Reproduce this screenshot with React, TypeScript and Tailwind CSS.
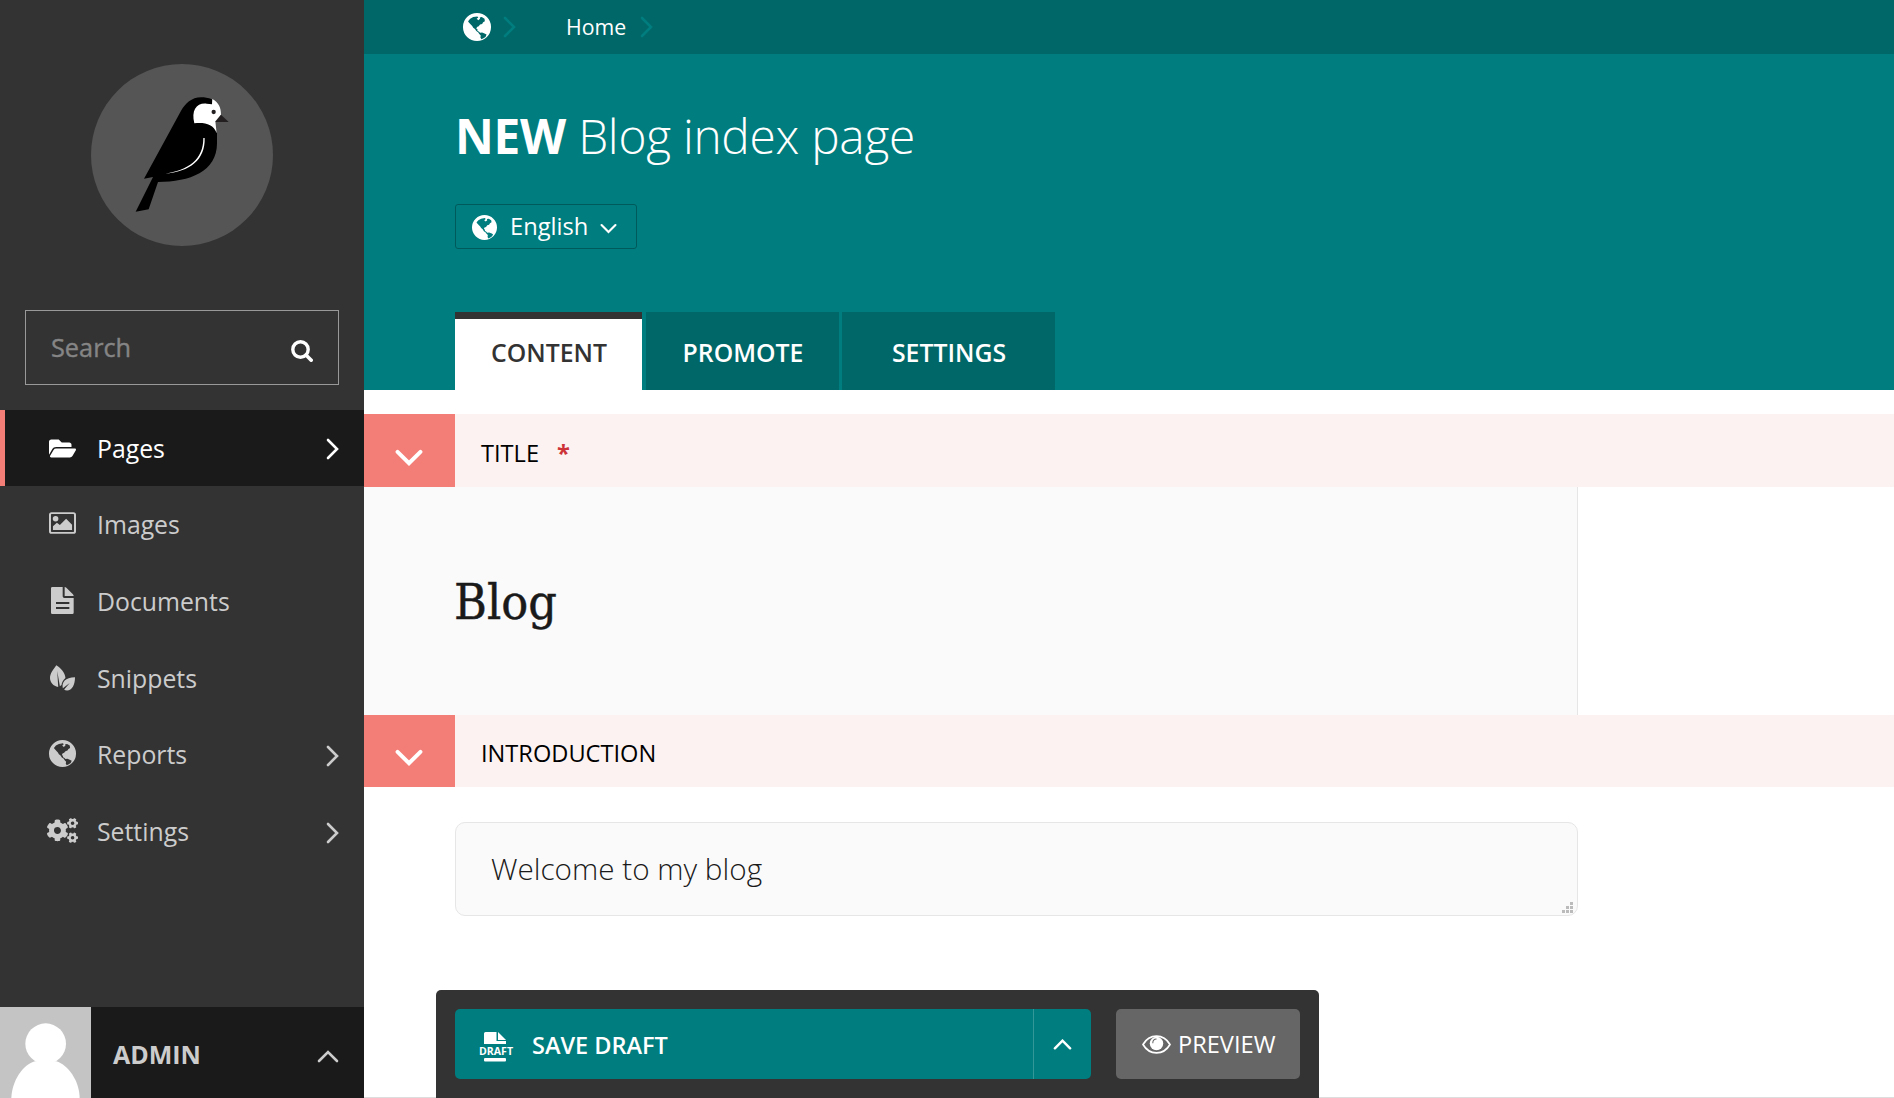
import type { ReactNode } from "react";
import { FaCogs, FaFolderOpen } from "react-icons/fa";

function Globe({ className }: { className: string }) {
  return (
    <svg viewBox="0 0 82 82" className={className}>
      <path
        fill="currentColor"
        fillRule="evenodd"
        d="M41 0a41 41 0 1 0 0 82a41 41 0 1 0 0-82zM15 24l6-7 9-5 12-2 3 3-5 4 5 4 5-4-1-4 6-1 8 5 1 7-5 3-3 5-6 2-4 5-5 2-2 5 4 2-1 4 5 3 3 3 6-1 7 3 6 3-3 7-6 4-6 3-3-5 1-6-5-5-2-4-6-4-4-6-5-4-3-5-5-5-6-7z"
      />
    </svg>
  );
}

function Chevron({ dir, className, stroke = 2.6 }: { dir: "right" | "down" | "up"; className: string; stroke?: number }) {
  const d = { right: "M2 2l9 9-9 9", down: "M2 2l9 9 9-9", up: "M2 11l9-9 9 9" }[dir];
  return (
    <svg viewBox={dir === "right" ? "0 0 13 22" : "0 0 22 13"} className={className}>
      <path d={d} fill="none" stroke="currentColor" strokeWidth={stroke} strokeLinecap="round" />
    </svg>
  );
}

function Bird() {
  return (
    <svg viewBox="33 42 546 546" className="size-[182px]">
      <circle cx="306" cy="315" r="273" fill="#555" />
      <path d="M396 148C345 130 320 155 304 181L192 386l27-5L167 485l39-7 28-82C330 396 411 365 411 280V250L400 215 396 148z" fill="#000" />
      <path d="M397 147C415 157 423 172 423 194L406 214l4 36C400 222 375 217 343 220C333 180 350 158 380 161l16 2z" fill="#fff" />
      <path d="M423 194l23 22h-40z" fill="#231f20" />
      <circle cx="401" cy="186" r="6.5" fill="#231f20" />
      <path d="M370 264h4C376 330 330 365 254 371C325 360 370 330 370 264z" fill="#fff" />
    </svg>
  );
}

function ImageIcon() {
  return (
    <svg viewBox="0 0 82 66" className="mb-0.5 h-[22px] w-[27px]">
      <rect x="3" y="3" width="76" height="60" rx="5" fill="none" stroke="currentColor" strokeWidth="6" />
      <circle cx="20" cy="20" r="8.5" fill="currentColor" />
      <path d="M12 54V43l12-11 9 7 19-19 18 18v16z" fill="currentColor" />
    </svg>
  );
}

function DocIcon() {
  return (
    <svg viewBox="0 0 69 81" className="mb-0.5 h-[27px] w-[23px]">
      <path
        fill="currentColor"
        fillRule="evenodd"
        d="M4 0h31v28q0 5 5 5h28v44q0 4-4 4H4q-4 0-4-4V4q0-4 4-4zM15 45v6h40v-6zM15 60v6h40v-6zM41 0q3 0 5 2l19 19q3 3 3 6H41z"
      />
    </svg>
  );
}

function LeavesIcon() {
  return (
    <svg viewBox="0 0 76 78" className="h-[26px] w-[25px]">
      <path fill="currentColor" fillRule="evenodd" d="M19 0C32 8 46 22 47 39C39 46 36 54 35 60L30 64L22 18L25 66C10 64 0 52 0 39C0 24 10 14 19 0z" />
      <path fill="currentColor" d="M76 37C76 60 67 77 52 77Q46 77 43 74L60 54L39 70C35 52 46 38 76 37z" />
    </svg>
  );
}

function SearchIcon() {
  return (
    <svg viewBox="0 0 22 22" className="size-[22px]">
      <circle cx="9.5" cy="9.5" r="7.7" fill="none" stroke="currentColor" strokeWidth="3.4" />
      <path d="M15 15l5.2 5.2" stroke="currentColor" strokeWidth="3.6" strokeLinecap="round" />
    </svg>
  );
}

function EyeIcon() {
  return (
    <svg viewBox="0 0 86 56" className="h-[19px] w-[29px]">
      <path d="M3 28C22-5 64-5 83 28C64 61 22 61 3 28z" fill="none" stroke="currentColor" strokeWidth="5" />
      <circle cx="43" cy="25" r="20" fill="currentColor" />
      <path d="M32 24C32 17 37 12 43 12" fill="none" stroke="#666" strokeWidth="3" />
    </svg>
  );
}

function DraftIcon() {
  return (
    <svg viewBox="0 0 40 30" className="h-[30px] w-[40px]">
      <path d="M8 1.500Q8 0 9.500 0H20.500V9H30V12H8zM22 0L30 8H22z" fill="currentColor" />
      <text x="20" y="23" textAnchor="middle" textLength="34" lengthAdjust="spacingAndGlyphs" fontSize="11" fontWeight="700" fontFamily="Open Sans, sans-serif" fill="currentColor">DRAFT</text>
      <rect x="8" y="26" width="22" height="3.500" rx="1" fill="currentColor" />
    </svg>
  );
}

function NavItem({ icon, label, active, more }: { icon: ReactNode; label: string; active?: boolean; more?: boolean }) {
  return (
    <a
      className={
        active
          ? "flex h-[76px] items-center border-l-5 border-[#f37e77] bg-[#1a1a1a] pr-[25px] pl-[39px] text-white"
          : "flex h-[76.800px] items-center pr-[25px] pl-11 text-[#ccc]"
      }
    >
      <span className="flex w-9 justify-center">{icon}</span>
      <span className="ml-[17px] grow text-[24.800px] leading-none">{label}</span>
      {more && <Chevron dir="right" className="mt-0.5 h-[22px] w-[13px]" />}
    </a>
  );
}

function SectionBar({ label, required, height, pad }: { label: string; required?: boolean; height: string; pad: string }) {
  return (
    <div className={`flex ${height} bg-[#fcf2f1]`}>
      <div className="flex w-[91px] items-center justify-center bg-[#f37e77] pt-[13px] pr-px text-white">
        <Chevron dir="down" stroke={3.1} className="h-[17px] w-[28px]" />
      </div>
      <h2 className={`flex items-center ${pad} pl-[26px] text-[23.600px] leading-none text-black`}>
        {label}
        {required && <span className="ml-[18px] font-bold text-[#cd3238]">*</span>}
      </h2>
    </div>
  );
}

export default function App() {
  return (
    <div className="flex h-[1098px] w-full overflow-hidden bg-white font-['Open_Sans',sans-serif]">
      <aside className="flex w-[364px] shrink-0 flex-col bg-[#333]">
        <div className="flex justify-center pt-16">
          <Bird />
        </div>
        <div className="mx-[25px] mt-16 flex h-[75px] w-[314px] items-center justify-between border border-[#999] pr-[25px] pl-[25px] text-white">
          <span className="text-[25.300px] leading-none text-[#858585] [-webkit-text-stroke:0.4px_#858585]">Search</span>
          <span className="mt-[7px]"><SearchIcon /></span>
        </div>
        <nav className="mt-[25px]">
          <NavItem active more label="Pages" icon={<FaFolderOpen className="size-[27px]" />} />
          <NavItem label="Images" icon={<ImageIcon />} />
          <NavItem label="Documents" icon={<DocIcon />} />
          <NavItem label="Snippets" icon={<LeavesIcon />} />
          <NavItem more label="Reports" icon={<Globe className="mb-0.5 size-[27px]" />} />
          <NavItem more label="Settings" icon={<FaCogs className="mb-0.5 size-[31px]" />} />
        </nav>
        <div className="mt-auto flex h-[91px] items-center bg-[#1a1a1a] text-[#ccc]">
          <svg viewBox="0 0 273 273" className="size-[91px]">
            <rect width="273" height="273" fill="#c4c4c4" />
            <circle cx="137" cy="110" r="61" fill="#fff" />
            <path d="M34 273C36 220 70 172 105 163H169C205 174 238 222 239 273z" fill="#fff" />
          </svg>
          <span className="ml-[22px] grow pt-1 text-[25px] leading-none font-bold">ADMIN</span>
          <Chevron dir="up" className="mt-2 mr-[25px] h-[13px] w-[22px]" />
        </div>
      </aside>

      <main className="flex grow flex-col border-b border-[#ddd]">
        <header className="flex h-[390px] flex-col bg-[#007d7e]">
          <nav className="flex h-[54px] shrink-0 items-center bg-[#006768] pl-[99px] text-white">
            <Globe className="size-[28px]" />
            <Chevron dir="right" className="ml-3 h-[22px] w-[13px] text-[#007d7e]" />
            <span className="ml-[50px] text-[21.300px] leading-none">Home</span>
            <Chevron dir="right" className="ml-3.5 h-[22px] w-[13px] text-[#007d7e]" />
          </nav>
          <h1 className="mt-[49px] ml-[91px] h-[66px] text-[47.800px] leading-[65px] font-light tracking-[-0.27px] text-white">
            <strong className="font-bold">NEW</strong> Blog index page
          </h1>
          <button className="mt-[35px] ml-[91px] flex h-[45px] w-[182px] items-center rounded-[3px] border border-[#005a5b] pl-4 text-white">
            <Globe className="mt-0.5 size-[25px]" />
            <span className="ml-[13px] text-[23.700px] leading-none">English</span>
            <Chevron dir="down" stroke={2.8} className="mt-[3px] ml-3 h-[11px] w-[17px]" />
          </button>
          <div className="mt-auto ml-[91px] flex h-[78px] text-[24.800px] leading-none font-semibold text-white">
            <div className="flex w-[187px] items-center justify-center border-t-7 border-[#333] bg-white pb-[5px] pl-px text-[#333]">CONTENT</div>
            <div className="ml-1 flex w-[193px] items-center justify-center bg-[#006768] pt-0.5 pl-px">PROMOTE</div>
            <div className="ml-[3px] flex w-[213px] items-center justify-center bg-[#006768] pt-0.5 pl-px">SETTINGS</div>
          </div>
        </header>

        <section className="mt-6">
          <SectionBar label="TITLE" required height="h-[73px]" pad="pt-[7px]" />
          <div className="flex h-[228px] w-[1214px] items-center border-r border-[#e6e6e6] bg-[#fafafa] pt-0.5 pl-[90px]">
            <span className="origin-left scale-x-[0.934] font-['DejaVu_Serif',serif] text-[48px] leading-none text-[#1a1a1a] [-webkit-text-stroke:0.5px_#1a1a1a]">Blog</span>
          </div>
          <SectionBar label="INTRODUCTION" height="h-[72px]" pad="pt-[5px]" />
        </section>

        <div className="relative mt-[35px] ml-[91px] flex h-[94px] w-[1123px] items-center rounded-[10px] border border-[#e6e6e6] bg-[#fafafa] pl-[35px] text-[29.700px] font-light text-[#1a1a1a]">
          Welcome to my blog
          <svg viewBox="0 0 11 11" className="absolute right-1 bottom-0.5 size-[11px]">
            <path d="M8 0h3v3h-3zM4 4h3v3h-3zM8 4h3v3h-3zM0 8h3v3h-3zM4 8h3v3h-3zM8 8h3v3h-3z" fill="#bbb" />
          </svg>
        </div>

        <footer className="mt-auto -mb-px ml-[72px] flex h-[108px] w-[883px] gap-[25px] rounded-t-[5px] bg-[#333] px-[19px] pt-[19px] text-[23.600px] leading-none text-white">
          <div className="flex h-[70px] w-[636px] rounded-[5px] bg-[#007d7e]">
            <button className="flex grow items-center pt-[5px] pl-[21px]">
              <DraftIcon />
              <span className="ml-4 pb-px text-[23.500px] font-semibold">SAVE DRAFT</span>
            </button>
            <button className="flex w-[58px] items-center justify-center border-l border-[#339798]">
              <Chevron dir="up" stroke={2.9} className="mr-px h-[11px] w-[19px]" />
            </button>
          </div>
          <button className="flex h-[70px] w-[184px] items-center rounded-[5px] bg-[#666] pl-[26px]">
            <EyeIcon />
            <span className="ml-[7px] pt-0.5">PREVIEW</span>
          </button>
        </footer>
      </main>
    </div>
  );
}
